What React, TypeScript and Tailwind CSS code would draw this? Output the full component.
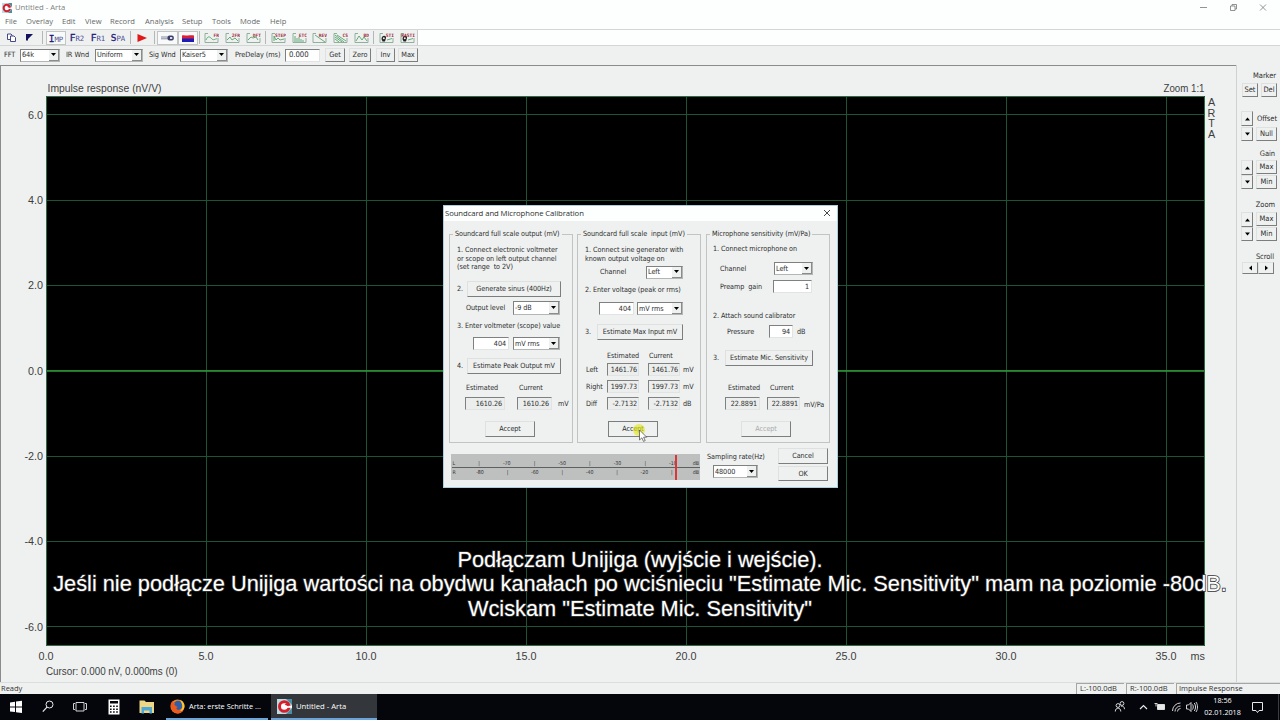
import { type ReactNode } from "react";
import clsx from "clsx";

type BoxProps = {
  children?: ReactNode;
  className?: string;
};

const ui = "font-['DejaVu_Sans_Condensed','DejaVu_Sans',sans-serif] tracking-[-0.06px]";
const segoe = "font-['Open_Sans','Noto_Sans',sans-serif]";

const Button: React.FC<BoxProps> = ({ children, className }) => (
  <button
    className={clsx(
      "flex shrink-0 items-center justify-center whitespace-nowrap border-b-[1.5px] border-l border-r-[1.5px] border-t border-b-[#7c7e7e] border-l-[#dfe1e1] border-r-[#7c7e7e] border-t-[#dfe1e1] bg-[#eff1f0]",
      className,
    )}
  >
    {children}
  </button>
);

const Field: React.FC<BoxProps & { readOnly?: boolean }> = ({
  children,
  className,
  readOnly,
}) => (
  <div
    className={clsx(
      "flex shrink-0 items-center justify-end border border-b-[#e2e4e4] border-l-[#7f8181] border-r-[#e2e4e4] border-t-[#7f8181] pr-[2px]",
      readOnly ? "bg-[#eceeed]" : "bg-white",
      className,
    )}
  >
    {children}
  </div>
);

const Select: React.FC<BoxProps> = ({ children, className }) => (
  <div
    className={clsx(
      "flex shrink-0 items-center justify-between border border-b-[#b4b6b6] border-l-[#7f8181] border-r-[#b4b6b6] border-t-[#7f8181] bg-white pl-px",
      className,
    )}
  >
    <span className="whitespace-nowrap">{children}</span>
    <span className="flex h-full w-[10px] items-center justify-center border-b border-r border-[#8a8c8c] bg-[#eff1f0]">
      <svg width="5" height="3" viewBox="0 0 5 3">
        <path d="M0 0h5L2.500 3z" fill="#000" />
      </svg>
    </span>
  </div>
);

const ArtaLogo: React.FC<{ size: number }> = ({ size }) => (
  <svg width={size} height={size} viewBox="0 0 15 15" className="shrink-0">
    <path d="M0 0h15v15H0z" fill="#b9dde2" />
    <path d="M9 0h6v6z" fill="#4a8ea0" />
    <path d="M9 15h6V9z" fill="#4a8ea0" />
    <circle cx="7.300" cy="7.500" r="4.800" fill="#fff" stroke="#d5202c" strokeWidth="3" />
    <path d="M9 6.800h6v2H9z" fill="#fff" />
    <path d="M7.500 5.500l4-2v4z" fill="#d5202c" />
  </svg>
);

/* ---------- window chrome ---------- */

const TitleBar = () => (
  <div className={clsx("flex h-[15px] items-center bg-[#fdfffe] pl-[2px] text-[#7d7f7f]", segoe)}>
    <ArtaLogo size={10} />
    <span className="ml-[3px] flex-1 text-[7.7px]">Untitled - Arta</span>
    <svg width="70" height="12" viewBox="0 0 70 12" fill="none" stroke="#777" strokeWidth="0.8" className="mb-px mr-[10px]">
      <path d="M0 6.500h7" />
      <path d="M30.500 5h4.500v4.500h-4.500zM32 5V3.500h4.500V8H35" />
      <path d="M60 3.500l6 6M66 3.500l-6 6" />
    </svg>
  </div>
);

const menu = [
  ["File", "w-[21px]"],
  ["Overlay", "w-[36px]"],
  ["Edit", "w-[23px]"],
  ["View", "w-[25px]"],
  ["Record", "w-[35px]"],
  ["Analysis", "w-[37px]"],
  ["Setup", "w-[30px]"],
  ["Tools", "w-[28px]"],
  ["Mode", "w-[30px]"],
  ["Help", "w-[20px]"],
];

const MenuBar = () => (
  <div className={clsx("flex h-[14px] items-center bg-[#fdfffe] pl-[5px] text-[7.6px] text-[#656767]", segoe)}>
    {menu.map(([label, width]) => (
      <span key={label} className={clsx("whitespace-nowrap", width)}>
        {label}
      </span>
    ))}
  </div>
);

const Separator: React.FC<{ className?: string }> = ({ className }) => (
  <span className={clsx("h-[13px] w-px shrink-0 bg-[#b5b7b7]", className)} />
);

const ModeLabel: React.FC<{ head: string; tail: string; className: string }> = ({
  head,
  tail,
  className,
}) => (
  <span
    className={clsx(
      "flex h-[14px] shrink-0 items-baseline justify-center font-['DejaVu_Sans_Mono',monospace] leading-[14px] text-[#1c1c78]",
      className,
    )}
  >
    <span className="text-[9.5px] [-webkit-text-stroke:0.3px_#1c1c78]">{head}</span>
    <span className="text-[7.3px] text-[#4c4c90]">{tail}</span>
  </span>
);

type ToolIconProps = {
  label: string;
  className: string;
  curve?: string;
  speaker?: boolean;
};

const ChartIcon: React.FC<ToolIconProps> = ({ label, className, curve, speaker }) => (
  <svg width="15" height="12" viewBox="0 0 15 12" className={clsx("shrink-0", className)}>
    <path d="M4 1.500H1V10.500H14V6" fill="none" stroke="#86a892" strokeWidth="0.9" />
    {curve && <path d={curve} fill="none" stroke="#3f9a5a" strokeWidth="0.8" />}
    {speaker && (
      <>
        <path d="M2.500 7c0-4 5-4 4.500-1L6 9.500H3.500z" fill="#222" />
        <circle cx="4.800" cy="6.300" r="1" fill="#eee" />
        <path d="M8 8l5-1.500" stroke="#3f9a5a" strokeWidth="0.8" />
      </>
    )}
    <text x="15" y="4.600" textAnchor="end" fontSize="4.600" fontWeight="700" fontFamily="DejaVu Sans Mono, monospace" fill="#a02c3c">
      {label}
    </text>
  </svg>
);

const Toolbar = () => (
  <div className="flex h-[17px] border-y border-[#d4d6d6] bg-[#fdfffe]">
    <div className="flex w-[418px] items-center border-r border-[#c6c8c8] bg-[#eff1f0]">
      <svg width="9" height="9" viewBox="0 0 9 9" fill="#fff" stroke="#33357a" strokeWidth="0.9" className="ml-[7px] shrink-0">
        <path d="M0.500 1h3.500l1 1v4.500H0.500z" />
        <path d="M3.500 3H7l1.500 1.500V8.500h-5z" />
      </svg>
      <svg width="7" height="7" viewBox="0 0 7 7" className="ml-[10px] shrink-0">
        <path d="M0 0h7L2 5v1.500H0z" fill="#12125e" />
      </svg>
      <Separator className="ml-[9px]" />
      <ModeLabel head="I" tail="MP" className="ml-[3px] w-[20px] border border-[#c3c5c5] bg-[#f8faf9]" />
      <ModeLabel head="F" tail="R2" className="ml-[2px] w-[18px]" />
      <ModeLabel head="F" tail="R1" className="ml-[3px] w-[18px]" />
      <ModeLabel head="S" tail="PA" className="ml-[2px] w-[18px]" />
      <Separator className="ml-[3px]" />
      <svg width="10" height="8" viewBox="0 0 10 8" className="ml-[6px] shrink-0">
        <path d="M0.500 0L10 4L0.500 8z" fill="#e01818" />
      </svg>
      <Separator className="ml-[7px]" />
      <span className="ml-[2px] flex h-[14px] w-[21px] shrink-0 items-center justify-center border border-[#c3c5c5] bg-[#f8faf9]">
        <svg width="13" height="7" viewBox="0 0 13 7">
          <path d="M0 3h7M0 4.800h7" stroke="#7c7e9c" strokeWidth="0.9" />
          <rect x="6.500" y="1.500" width="6.300" height="5" rx="2" fill="#3c3e68" />
          <path d="M9 3h2.300v2H9z" fill="#d8daee" />
        </svg>
      </span>
      <span className="flex h-[14px] w-[20px] shrink-0 items-center justify-center border border-[#c3c5c5] bg-[#f8faf9]">
        <svg width="12" height="8" viewBox="0 0 12 8">
          <path d="M0 3h12v5H0z" fill="#1c1cb8" />
          <path d="M0 1.500c2-1 4 .5 6 0s4-.5 6 0V4.500H0z" fill="#dc2038" />
        </svg>
      </span>
      <Separator className="ml-px" />
      <ChartIcon label="FR" className="ml-[4px]" curve="M2 8c2-5 4-3 6-1s4-1 5 0" />
      <ChartIcon label="2FR" className="ml-[6px]" curve="M2 8l3-3 2 3 3-2 3 3" />
      <ChartIcon label="DFT" className="ml-[6px]" curve="M2 8l3-3 2 1 3-1 2 3" />
      <Separator className="ml-[4px]" />
      <ChartIcon label="STEP" className="ml-[5px]" curve="M3 9V4l2 4 2-2 2 2 4-1" />
      <ChartIcon label="ETC" className="ml-[6px]" curve="M3 10V4M5 10V6M7 10V5M9 10V7M11 10V8" />
      <ChartIcon label="REV" className="ml-[5px]" curve="M3 3l10 7" />
      <ChartIcon label="CS" className="ml-[6px]" curve="M2 3l9 7M2 5l7 5M2 7l4 3M4 3l9 6" />
      <ChartIcon label="BD" className="ml-[6px]" curve="M2 9l3-5 3 4 2-3 3 4" />
      <Separator className="ml-[4px]" />
      <ChartIcon label="STI" className="ml-[5px]" speaker />
      <ChartIcon label="RASTI" className="ml-[6px]" speaker />
    </div>
  </div>
);

const SettingsBar = () => (
  <div className={clsx("flex h-[19px] items-center bg-[#eff1f0] pb-px pl-1 text-[7.3px] text-[#2c2e2e]", ui)}>
    <span className="w-[16px]">FFT</span>
    <Select className="h-[13px] w-[40px]">64k</Select>
    <span className="ml-[6px] w-[29px] whitespace-nowrap">IR Wnd</span>
    <Select className="h-[13px] w-[48px]">Uniform</Select>
    <span className="ml-[6px] w-[31px] whitespace-nowrap">Sig Wnd</span>
    <Select className="h-[13px] w-[48px]">Kaiser5</Select>
    <span className="ml-[7px] w-[50px] whitespace-nowrap">PreDelay (ms)</span>
    <Field className="h-[13px] w-[35px] !justify-start pl-[3px] text-[7.7px]">0.000</Field>
    <Button className="ml-[5px] h-[14px] w-[20px]">Get</Button>
    <Button className="ml-[4px] h-[14px] w-[22px]">Zero</Button>
    <Button className="ml-[5px] h-[14px] w-[19px]">Inv</Button>
    <Button className="ml-[3px] h-[14px] w-[20px]">Max</Button>
  </div>
);

/* ---------- impulse response plot ---------- */

const columns = [0, 1, 2, 3, 4, 5, 6, 7];
const rows = [6, 4, 2, 0, -2, -4, -6];

const Plot = () => (
  <svg
    width="1237"
    height="617"
    viewBox="0 65 1237 617"
    className="shrink-0 bg-[#eff1f0]"
    fontFamily="Liberation Sans, Arial, sans-serif"
    fontSize="10.800"
    fill="#3c3e3e"
  >
    <path d="M0 65.500H1236.500" stroke="#8a8c8c" />
    <path d="M0.500 65V682" stroke="#8a8c8c" />
    <path d="M1236.500 65V682" stroke="#d0d2d2" />
    <path d="M46 96h1159v550H46z" fill="#000" />
    {columns.map((i) => (
      <path key={i} d={`M${46.5 + i * 160} 96V646`} stroke="#1d5534" />
    ))}
    {rows.map((v) => (
      <path
        key={v}
        d={`M46 ${Math.round(370.4 - v * 42.66) + 0.5}H1205`}
        stroke="#1d5534"
      />
    ))}
    <path d="M46 371H1205" stroke="#2f9a36" strokeWidth="1.500" />
    <path d="M46.500 96.500H1204.500V645.500H46.500z" fill="none" stroke="#2b6b45" />
    <text x="47.500" y="92" textLength="114" lengthAdjust="spacingAndGlyphs">
      Impulse response (nV/V)
    </text>
    <text x="1163.500" y="92" textLength="41" lengthAdjust="spacingAndGlyphs">
      Zoom 1:1
    </text>
    {["A", "R", "T", "A"].map((c, i) => (
      <text key={i} x="1211.500" y={106 + i * 10.7} textAnchor="middle">
        {c}
      </text>
    ))}
    {rows.map((v) => (
      <text key={v} x="43" y={374.7 - v * 42.66} textAnchor="end">
        {v.toFixed(1)}
      </text>
    ))}
    {columns.map((i) => (
      <text key={i} x={46 + i * 160} y="660.400" textAnchor="middle">
        {(i * 5).toFixed(1)}
      </text>
    ))}
    <text x="1190.500" y="660.400">ms</text>
    <text x="46" y="674.700" textLength="131.500" lengthAdjust="spacingAndGlyphs">
      Cursor: 0.000 nV, 0.000ms (0)
    </text>
  </svg>
);

/* ---------- right-hand controls ---------- */

const arrows = {
  up: "M0 3.500h5L2.500 0.500z",
  down: "M0 0.500h5L2.500 3.500z",
  left: "M4 -0.500v5L1 2z",
  right: "M1 -0.500v5L4 2z",
};

const Arrow: React.FC<{ dir: keyof typeof arrows; className: string }> = ({ dir, className }) => (
  <Button className={className}>
    <svg width="5" height="4" viewBox="0 0 5 4" className="overflow-visible">
      <path d={arrows[dir]} fill="#000" />
    </svg>
  </Button>
);

const MaxMin = () => (
  <>
    <div className="flex justify-between">
      <Arrow dir="up" className="h-[15px] w-[12px]" />
      <Button className="h-[14px] w-[21px]">Max</Button>
    </div>
    <div className="flex justify-between">
      <Arrow dir="down" className="h-[14px] w-[12px]" />
      <Button className="h-[14px] w-[21px]">Min</Button>
    </div>
  </>
);

const SidePanel = () => (
  <div className={clsx("flex-1 bg-[#eff1f0] pl-1 pr-[3px] pt-[6px] text-[7.5px] leading-[10px] text-[#2c2e2e]", ui)}>
    <div className="pr-px text-right">Marker</div>
    <div className="mt-[2px] flex justify-between pl-px">
      <Button className="h-[14px] w-[16px]">Set</Button>
      <Button className="h-[14px] w-[16px]">Del</Button>
    </div>
    <div className="mt-[14px] flex items-center justify-between">
      <Arrow dir="up" className="h-[15px] w-[12px]" />
      <span>Offset</span>
    </div>
    <div className="mt-px flex justify-between">
      <Arrow dir="down" className="h-[14px] w-[12px]" />
      <Button className="h-[14px] w-[21px]">Null</Button>
    </div>
    <div className="mb-px mt-[8px] pr-[2px] text-right">Gain</div>
    <MaxMin />
    <div className="mb-[2px] mt-[11px] pr-[2px] text-right">Zoom</div>
    <MaxMin />
    <div className="mt-[11px] pr-[3px] text-right">Scroll</div>
    <div className="flex pl-px">
      <Arrow dir="left" className="h-[12px] w-[16px]" />
      <Arrow dir="right" className="h-[12px] w-[16px]" />
    </div>
  </div>
);

/* ---------- calibration dialog ---------- */

const Group: React.FC<{ title: string; children: ReactNode; className?: string }> = ({
  title,
  children,
  className,
}) => (
  <fieldset
    className={clsx("h-[214px] w-[124px] shrink-0 border border-[#c2c4c4]", className)}
  >
    <legend className="ml-[3px] h-[10px] whitespace-pre px-[2px] leading-[10px]">{title}</legend>
    {children}
  </fieldset>
);

const Row: React.FC<BoxProps> = ({ children, className }) => (
  <div className={clsx("flex items-center whitespace-nowrap", className)}>{children}</div>
);

const OutputGroup = () => (
  <Group title="Soundcard full scale output (mV)">
    <p className="mt-[7px] h-[26px] whitespace-pre pl-[7px] leading-[8.6px]">
      {"1. Connect electronic voltmeter\nor scope on left output channel\n(set range  to 2V)"}
    </p>
    <Row className="mt-[9px] h-[16px] pl-[7px]">
      <span className="w-[10px]">2.</span>
      <Button className="h-[16px] w-[94px]">Generate sinus (400Hz)</Button>
    </Row>
    <Row className="mt-[4px] h-[14px] pl-[16px]">
      <span className="w-[47px]">Output level</span>
      <Select className="h-[14px] w-[47px]">-9 dB</Select>
    </Row>
    <Row className="mt-[6px] h-[10px] pl-[7px]">3. Enter voltmeter (scope) value</Row>
    <Row className="mt-[6px] h-[13px] pl-[23px]">
      <Field className="h-[13px] w-[36px]">404</Field>
      <Select className="ml-[4px] h-[13px] w-[47px]">mV rms</Select>
    </Row>
    <Row className="mt-[8px] h-[16px] pl-[7px]">
      <span className="w-[10px]">4.</span>
      <Button className="h-[16px] w-[94px]">Estimate Peak Output mV</Button>
    </Row>
    <Row className="mt-[9px] h-[10px] pl-[16px]">
      <span className="w-[53px]">Estimated</span>
      <span>Current</span>
    </Row>
    <Row className="mt-[4px] h-[13px] pl-[15px]">
      <Field readOnly className="h-[13px] w-[40px]">1610.26</Field>
      <Field readOnly className="ml-[12px] h-[13px] w-[35px]">1610.26</Field>
      <span className="ml-[6px] pt-px">mV</span>
    </Row>
    <Row className="mt-[11px] h-[16px] pl-[35px]">
      <Button className="h-[16px] w-[50px]">Accept</Button>
    </Row>
  </Group>
);

const readings = [
  ["Left", "1461.76", "mV"],
  ["Right", "1997.73", "mV"],
  ["Diff", "-2.7132", "dB"],
];

const InputGroup = () => (
  <Group title="Soundcard full scale  input (mV)" className="ml-[4px]">
    <p className="mt-[7px] h-[18px] whitespace-pre pl-[7px] leading-[8.6px]">
      {"1. Connect sine generator with\nknown output voltage on"}
    </p>
    <Row className="mt-px h-[14px] pl-[22px]">
      <span className="w-[46px]">Channel</span>
      <Select className="h-[13px] w-[37px]">Left</Select>
    </Row>
    <Row className="mt-[6px] h-[10px] pl-[7px]">2. Enter voltage (peak or rms)</Row>
    <Row className="mt-[7px] h-[13px] pl-[21px]">
      <Field className="h-[13px] w-[35px]">404</Field>
      <Select className="ml-[3px] h-[13px] w-[46px]">mV rms</Select>
    </Row>
    <Row className="mt-[9px] h-[16px] pl-[7px]">
      <span className="w-[12px]">3.</span>
      <Button className="h-[16px] w-[86px]">Estimate Max Input mV</Button>
    </Row>
    <Row className="mb-[2px] mt-[11px] h-[10px] pl-[29px]">
      <span className="w-[42px]">Estimated</span>
      <span>Current</span>
    </Row>
    {readings.map(([name, value, unit]) => (
      <Row key={name} className="mb-[4px] h-[13px] pl-[8px]">
        <span className="w-[21px]">{name}</span>
        <Field readOnly className="h-[13px] w-[32px] !pr-px">{value}</Field>
        <Field readOnly className="ml-[9px] h-[13px] w-[32px] !pr-px">{value}</Field>
        <span className="ml-[3px]">{unit}</span>
      </Row>
    ))}
    <Row className="mt-[11px] h-[16px] pl-[30px]">
      <Button className="h-[16px] w-[50px] !border-[#7c7e7e]">Accept</Button>
    </Row>
  </Group>
);

const MicGroup = () => (
  <Group title="Microphone sensitivity (mV/Pa)" className="ml-[5px]">
    <Row className="mt-[5px] h-[10px] pl-[6px]">1. Connect microphone on</Row>
    <Row className="mt-[8px] h-[13px] pl-[13px]">
      <span className="w-[54px]">Channel</span>
      <Select className="h-[13px] w-[39px]">Left</Select>
    </Row>
    <Row className="mt-[5px] h-[13px] pl-[13px]">
      <span className="w-[53px] whitespace-pre">Preamp  gain</span>
      <Field className="h-[13px] w-[39px]">1</Field>
    </Row>
    <Row className="mt-[18px] h-[10px] pl-[6px]">2. Attach sound calibrator</Row>
    <Row className="mt-[4px] h-[13px] pl-[20px]">
      <span className="w-[42px]">Pressure</span>
      <Field className="h-[13px] w-[24px]">94</Field>
      <span className="ml-[4px]">dB</span>
    </Row>
    <Row className="mt-[12px] h-[16px] pl-[6px]">
      <span className="w-[12px]">3.</span>
      <Button className="h-[16px] w-[88px]">Estimate Mic. Sensitivity</Button>
    </Row>
    <Row className="mt-[17px] h-[10px] pl-[21px]">
      <span className="w-[42px]">Estimated</span>
      <span>Current</span>
    </Row>
    <Row className="mt-[4px] h-[13px] pl-[18px]">
      <Field readOnly className="h-[13px] w-[35px]">22.8891</Field>
      <Field readOnly className="ml-[7px] h-[13px] w-[33px] !pr-px">22.8891</Field>
      <span className="ml-[4px] pt-[2px]">mV/Pa</span>
    </Row>
    <Row className="mt-[11px] h-[16px] pl-[34px]">
      <Button className="h-[16px] w-[50px] text-[#a9abab]">Accept</Button>
    </Row>
  </Group>
);

const upperScale = ["|", "-70", "|", "-50", "|", "-30", "|", "-10"];
const lowerScale = ["-80", "|", "-60", "|", "-40", "|", "-20", "|"];

const LevelMeter = () => (
  <svg
    width="249"
    height="26"
    viewBox="0 0 249 26"
    className="shrink-0 bg-[#bec0c0]"
    fontFamily="DejaVu Sans Condensed, DejaVu Sans, sans-serif"
    fontSize="5.300"
    fill="#333"
  >
    <path d="M1 13.500H249" stroke="#5e6060" />
    <text x="1.500" y="11">L</text>
    <text x="1.500" y="19.700">R</text>
    {upperScale.map((t, i) => (
      <text key={i} x={28 + i * 27.7} y="11" textAnchor="middle">{t}</text>
    ))}
    {lowerScale.map((t, i) => (
      <text key={i} x={29 + i * 27.4} y="19.700" textAnchor="middle">{t}</text>
    ))}
    <text x="248" y="11" textAnchor="end">dB</text>
    <text x="248" y="19.700" textAnchor="end">dB</text>
    <path d="M225 1V26" stroke="#dc3538" strokeWidth="2" />
  </svg>
);

const CalibrationDialog = () => (
  <div
    className={clsx(
      "absolute left-[443px] top-[205px] h-[283px] w-[395px] border border-[#a9cfe0] bg-[#eff1f0] text-[7.2px] leading-[10px] text-[#2c2e2e]",
      ui,
    )}
  >
    <div className={clsx("flex h-[15px] items-center justify-between bg-[#fdfffe] pb-px pl-px pr-[6px] text-[7.7px]", segoe)}>
      <span>Soundcard and Microphone Calibration</span>
      <svg width="8" height="8" viewBox="0 0 8 8" stroke="#333" strokeWidth="0.9">
        <path d="M1 1l6 6M7 1l-6 6" />
      </svg>
    </div>
    <div className="flex pl-[5px] pt-[8px]">
      <OutputGroup />
      <InputGroup />
      <MicGroup />
    </div>
    <div className="flex pl-[7px]">
      <div className="pt-[11px]">
        <LevelMeter />
      </div>
      <div className="ml-[7px] w-[71px] pt-[9px]">
        <div className="whitespace-nowrap">Sampling rate(Hz)</div>
        <Select className="ml-[6px] mt-[3px] h-[13px] w-[45px]">48000</Select>
      </div>
      <div className="flex flex-col gap-[2px] pt-[5px]">
        <Button className="h-[16px] w-[50px]">Cancel</Button>
        <Button className="h-[15px] w-[50px]">OK</Button>
      </div>
    </div>
  </div>
);

const Pointer = () => (
  <svg width="24" height="24" viewBox="0 0 24 24" className="absolute left-[628px] top-[421px]">
    <circle cx="11" cy="9" r="6" fill="#e4e81a" fillOpacity="0.65" />
    <path d="M11.500 9v10l2.400-2.200 1.600 3.600 1.700-.8-1.600-3.400h3.100z" fill="#fff" stroke="#444" strokeWidth="0.7" />
  </svg>
);

const Subtitles = () => (
  <div className="absolute left-0 top-[547.5px] w-full whitespace-nowrap text-center font-['Liberation_Sans',Arial,sans-serif] text-[21.75px] leading-[24.5px] text-white [paint-order:stroke] [-webkit-text-stroke:1.5px_#333]">
    <div>Podłączam Unijiga (wyjście i wejście).</div>
    <div>
      Jeśli nie podłącze Unijiga wartości na obydwu kanałach po wciśnieciu "Estimate Mic. Sensitivity" mam na poziomie -80dB.
    </div>
    <div>Wciskam "Estimate Mic. Sensitivity"</div>
  </div>
);

/* ---------- bottom bars ---------- */

const StatusBar = () => (
  <div className={clsx("flex h-[12px] items-center border-t border-[#dcdede] bg-[#eff1f0] text-[7.5px] leading-[10px] text-[#333]", segoe)}>
    <span className="w-[1076px] pb-[2px] pl-px">Ready</span>
    <span className="h-[11px] w-[48px] border-l border-t border-[#a4a6a6] pl-[3px] leading-[8px]">L:-100.0dB</span>
    <span className="ml-[2px] h-[11px] w-[48px] border-l border-t border-[#a4a6a6] pl-[3px] leading-[8px]">R:-100.0dB</span>
    <span className="ml-[2px] h-[11px] flex-1 border-l border-t border-[#a4a6a6] pl-[2px] leading-[8px]">Impulse Response</span>
  </div>
);

const Taskbar = () => (
  <div className={clsx("flex h-[26px] items-center bg-[#04060c] text-[7.4px] text-white", segoe)}>
    <svg width="166" height="26" viewBox="0 0 166 26" className="shrink-0">
      <path d="M10 8.500l5-.7V12.500h-5zM16 7.600l6-.8V12.500h-6zM10 13.400h5v4.700l-5-.7zM16 13.400h6V19l-6-.8z" fill="#fff" />
      <g fill="none" stroke="#e8eaea">
        <circle cx="49.500" cy="10.500" r="3.500" />
        <path d="M47 13.200L42.800 17.600" strokeWidth="1.200" />
        <path d="M76 8.500h8v8.500h-8zM75 9.500h-1.500v6H75M85 9.500h1.500v6H85" strokeWidth="0.9" />
      </g>
      <path d="M108.500 5.500h11v15h-11z" fill="#fff" />
      <path d="M110 7h8v2.500h-8z" fill="#04060c" />
      <path d="M110 12.300h8M110 15.200h8M110 18h8" stroke="#04060c" strokeWidth="1.500" strokeDasharray="1.600 1.500" />
      <path d="M139.500 6.500h5l1.500 1.500h8v11h-14.500z" fill="#eed784" />
      <path d="M141.500 13h10.500v6.500h-2.500v-3h-5.500v3h-2.500z" fill="#4ba8d8" />
    </svg>
    <div className="flex h-[26px] w-[102px] shrink-0 items-center border-b-2 border-[#6ba4d8] pl-1 pt-px">
      <svg width="15" height="15" viewBox="0 0 15 15" className="shrink-0">
        <circle cx="7.500" cy="7.500" r="7" fill="#f0851c" />
        <circle cx="8" cy="6.500" r="4.700" fill="#2f5fa8" />
        <path d="M1 4C0 11 4 14.500 8 14.500s6.500-4 6-8c-1 4-3 5-5.500 4.500S6 9 7.500 8L4.500 6 5 4 3.500 4 3 2z" fill="#ee5a1e" />
        <path d="M10 .8c3 1.500 5 4 4.400 7.500-.8 3-2.800 4-4.400 3.700 3-2 3-6 0-11.200z" fill="#fcc630" />
      </svg>
      <span className="ml-1 whitespace-nowrap">Arta: erste Schritte ...</span>
    </div>
    <div className="ml-[3px] flex h-[26px] w-[106px] shrink-0 items-center border-b-2 border-[#6ba4d8] bg-[#33363a] pl-[6px] pt-px">
      <ArtaLogo size={15} />
      <span className="ml-1 whitespace-nowrap text-[7.7px]">Untitled - Arta</span>
    </div>
    <div className="flex-1" />
    <svg width="85" height="26" viewBox="1115 0 85 26" fill="none" stroke="#e8eaea" strokeWidth="0.9" className="shrink-0">
      <circle cx="1119" cy="11.500" r="1.900" />
      <path d="M1116.300 17.500c0-4.500 5.500-4.500 5.500 0" />
      <circle cx="1123" cy="9.500" r="1.900" />
      <path d="M1122 12.200c2-.5 3.500.8 3.500 3" />
      <path d="M1141 15l3.500-3.500L1148 15" strokeWidth="1.200" />
      <path d="M1155.500 9.500h3M1157 9.500v3" />
      <path d="M1158.500 10.500h7v5h-7z" fill="#e8eaea" />
      <path d="M1173.500 17a8 8 0 0 1 8-8M1176 17.500a5.500 5.500 0 0 1 5.500-5.500M1178.500 17.500a3 3 0 0 1 3-3" />
      <path d="M1187.500 11h2l2.500-2.500v9L1189.500 15h-2zM1193.500 10.500c1 1.500 1 3.500 0 5M1195.300 9c1.700 2.500 1.700 5.500 0 8M1197 8c2 3 2 7 0 10" />
    </svg>
    <div className="ml-[5px] w-[37px] whitespace-nowrap pb-[2px] text-center text-[7.200px] leading-[12px]">
      <div>18:56</div>
      <div>02.01.2018</div>
    </div>
    <svg width="13" height="26" viewBox="0 0 13 26" fill="none" stroke="#e8eaea" className="ml-[10px] shrink-0">
      <path d="M1.500 8.500h10v8h-3.500l-1.500 2-1.500-2h-3.500z" />
    </svg>
    <span className="ml-[14px] mr-[1px] h-[26px] w-px bg-[#3a3c40]" />
  </div>
);

const App = () => (
  <div className="relative flex h-[720px] w-[1280px] flex-col overflow-hidden bg-[#eff1f0]">
    <TitleBar />
    <MenuBar />
    <Toolbar />
    <SettingsBar />
    <main className="flex h-[617px]">
      <Plot />
      <SidePanel />
    </main>
    <StatusBar />
    <Taskbar />
    <CalibrationDialog />
    <Pointer />
    <Subtitles />
  </div>
);

export default App;
